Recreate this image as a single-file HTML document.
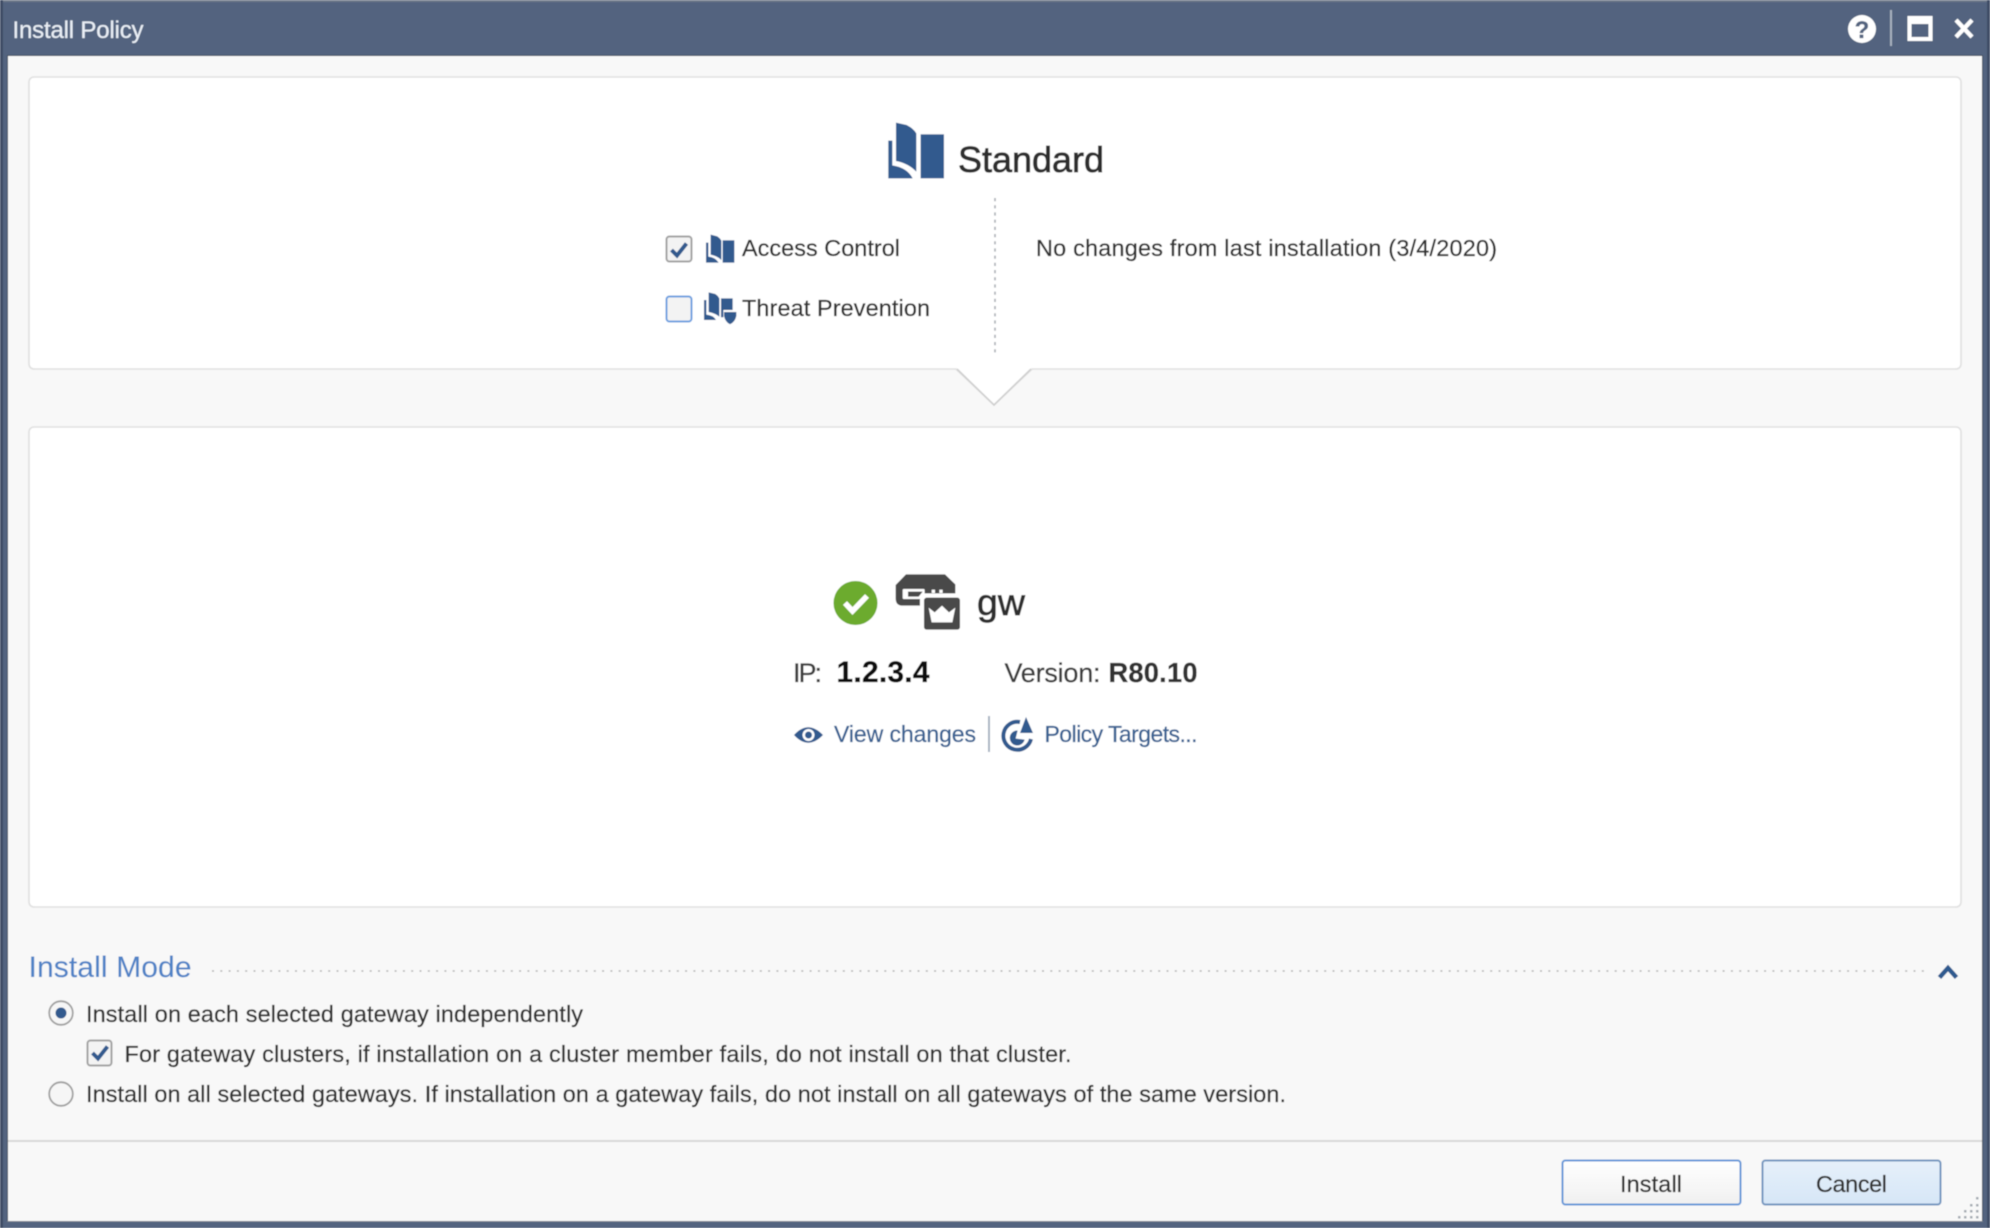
<!DOCTYPE html>
<html><head><meta charset="utf-8"><title>Install Policy</title>
<style>
html,body{margin:0;padding:0;width:1990px;height:1228px;overflow:hidden;background:#f8f8f8}
svg{display:block;position:absolute;left:0;top:0}
text{font-family:"Liberation Sans",sans-serif;fill:#303030;stroke:#303030;stroke-width:.3px}
</style></head><body>
<svg width="1990" height="1228" viewBox="0 0 1990 1228" xmlns="http://www.w3.org/2000/svg">
<defs>
<linearGradient id="gi" x1="0" y1="0" x2="0" y2="1"><stop offset="0" stop-color="#ffffff"/><stop offset="1" stop-color="#f0f0f0"/></linearGradient>
<linearGradient id="gc" x1="0" y1="0" x2="0" y2="1"><stop offset="0" stop-color="#e6f0fa"/><stop offset="1" stop-color="#d6e6f7"/></linearGradient>
<filter id="soft" x="0" y="0" width="100%" height="100%"><feGaussianBlur stdDeviation="0.55"/></filter>
</defs>
<g filter="url(#soft)">
<!-- window frame -->
<rect width="1990" height="1228" fill="#53647f"/>
<rect width="1990" height="2" fill="#6f7a8a"/>
<rect x="0" y="0" width="3" height="1228" fill="#414e66"/>
<rect x="1987" y="0" width="3" height="1228" fill="#414e66"/>
<rect x="8" y="55" width="1974" height="1167" fill="#f8f8f8"/>
<rect x="7" y="55" width="1976" height="1" fill="#454f60"/>
<rect x="7" y="55" width="1" height="1167" fill="#454f60"/>
<rect x="1982" y="55" width="1" height="1167" fill="#454f60"/>
<rect x="7" y="1221" width="1976" height="1" fill="#777f8c"/>

<!-- title -->
<text x="12.500" y="38" font-size="24" textLength="131" style="fill:#e9eef5;stroke:#e9eef5;stroke-width:.2px">Install Policy</text>
<circle cx="1862" cy="29" r="14" fill="#fff"/>
<text x="1862" y="38" font-size="24" font-weight="bold" text-anchor="middle" style="fill:#53647f;stroke:#53647f">?</text>
<rect x="1890" y="10" width="2" height="36" fill="#a7b0be"/>
<rect x="1907.500" y="16" width="25" height="25" fill="#fff"/>
<rect x="1911.500" y="24" width="17" height="13" fill="#53647f"/>
<path d="M1956 20L1972 37M1972 20L1956 37" stroke="#fff" stroke-width="4.200" fill="none"/>

<!-- top panel -->
<path d="M34 77H1956a5 5 0 0 1 5 5V364a5 5 0 0 1-5 5H1032L994 405L956 369H34a5 5 0 0 1-5-5V82a5 5 0 0 1 5-5Z" fill="#fff" stroke="#e0e0e0" stroke-width="1.600"/>
<path d="M957 369L994 405L1031 369" fill="none" stroke="#cfcfcf" stroke-width="1.600"/>
<line x1="995" y1="198" x2="995" y2="354" stroke="#a9adb3" stroke-width="1.600" stroke-dasharray="3.200 4"/>

<!-- book large -->
<g transform="translate(640 100) scale(.3333)" fill="#335a8e">
<path d="M768 68L800 75Q820 85 829 100V215Q805 190 768 183Z"/>
<path d="M745 122H757V196Q802 203 818 235H745Z"/>
<rect x="842" y="103" width="70" height="132"/>
</g>
<text x="958" y="172" font-size="36" textLength="146" style="fill:#2e2e2e;stroke:#2e2e2e;stroke-width:.8px">Standard</text>

<!-- checkboxes -->
<rect x="666.500" y="236.500" width="25" height="25" rx="3" fill="#f3f3f3" stroke="#a3a3a3" stroke-width="2"/>
<path d="M671.500 250L677 255.500L686.500 243.500" fill="none" stroke="#335a8e" stroke-width="4"/>
<g transform="translate(640 100) scale(.3333)" fill="#335a8e">
<path d="M212 404L232 409Q240 414 244 422V480Q232 468 212 464Z"/>
<path d="M198 428H205V470Q226 472 236 488H198Z"/>
<rect x="248" y="421" width="35" height="67"/>
</g>
<text x="742" y="256" font-size="23.400" textLength="158">Access Control</text>

<rect x="666.500" y="296.500" width="25" height="25" rx="3" fill="#f3f3f3" stroke="#6ea0e0" stroke-width="2"/>
<g transform="translate(640 100) scale(.3333)" fill="#335a8e">
<path d="M206 577L226 582Q234 587 238 595V650Q226 640 206 636Z"/>
<path d="M192 600H199V644Q220 646 228 660H192Z"/>
<path d="M243 595H278V630H250V652H243Z"/>
<path d="M252 636H289V648Q285 666 270 673Q256 666 252 648Z"/>
</g>
<text x="742" y="316" font-size="23.400" textLength="188">Threat Prevention</text>
<text x="1036" y="256" font-size="23.400" textLength="461">No changes from last installation (3/4/2020)</text>

<!-- middle panel -->
<rect x="29" y="427" width="1932" height="480" rx="5" fill="#fff" stroke="#e0e0e0" stroke-width="1.600"/>
<circle cx="855.500" cy="603" r="22" fill="#6cab2f"/>
<path d="M845 603L852.500 611L867 596" fill="none" stroke="#fff" stroke-width="5.500"/>
<!-- gateway -->
<g transform="translate(880 565) scale(.3333)">
<path d="M78 28H195L226 58V85H132V100H120L120 122H68Q47 122 47 100V60Z" fill="#4a4a4a"/>
<rect x="68" y="72" width="66" height="30" rx="3" fill="#fff"/>
<path d="M84 80H128L116 95H84Z" fill="#4a4a4a"/>
<rect x="155" y="74" width="10" height="10" fill="#fff"/><rect x="178" y="74" width="10" height="10" fill="#fff"/>
<rect x="132" y="98" width="108" height="96" rx="8" fill="#4a4a4a"/>
<path d="M146 128L164 142L186 122L207 142L226 128L217 172H155Z" fill="#fff"/>
</g>
<text x="977" y="615" font-size="37.500" textLength="48" style="fill:#2e2e2e;stroke:#2e2e2e;stroke-width:.7px">gw</text>
<text x="793" y="682" font-size="27" textLength="29" style="fill:#3c3c3c">IP:</text>
<text x="836.500" y="682" font-size="30" font-weight="bold" textLength="93" style="fill:#111;stroke:#111">1.2.3.4</text>
<text x="1004.500" y="682" font-size="27" textLength="96" style="fill:#3c3c3c">Version:</text>
<text x="1108.500" y="682" font-size="27.300" font-weight="bold" textLength="89">R80.10</text>

<!-- eye -->
<path d="M794 735Q808 719.500 823 735Q808 750.500 794 735Z" fill="#335a8e"/>
<circle cx="808.500" cy="735" r="6" fill="#fff"/><circle cx="808.500" cy="735" r="3.500" fill="#335a8e"/>
<text x="834" y="742" font-size="23" textLength="142" style="fill:#3a6292;stroke:#3a6292">View changes</text>
<rect x="988" y="716" width="2" height="36" fill="#a9b4c2"/>
<!-- policy targets icon -->
<path d="M1020 722A14 14 0 1 0 1031 739" fill="none" stroke="#335a8e" stroke-width="4"/>
<path d="M1017 731A7 7 0 1 0 1024 740L1015 739Z" fill="#335a8e" stroke="#335a8e" stroke-width="1"/>
<path d="M1026 717L1033 733H1020Z" fill="#335a8e"/>
<text x="1044.500" y="742" font-size="23" textLength="153" style="fill:#3a6292;stroke:#3a6292">Policy Targets...</text>

<!-- install mode -->
<text x="28.500" y="977" font-size="30" textLength="163" style="fill:#4f82c6;stroke:#4f82c6;stroke-width:.1px">Install Mode</text>
<line x1="212" y1="971" x2="1928" y2="971" stroke="#b4b4b4" stroke-width="1.600" stroke-dasharray="2 6.300"/>
<path d="M1939.500 977.500L1948 968L1956.500 977.500" fill="none" stroke="#2f5a8f" stroke-width="4.500"/>

<circle cx="61" cy="1013" r="11.800" fill="#f6f6f6" stroke="#a0a0a0" stroke-width="1.800"/>
<circle cx="61" cy="1013" r="5.500" fill="#335a8e"/>
<text x="86" y="1022" font-size="23.400" textLength="497">Install on each selected gateway independently</text>
<rect x="87.500" y="1040.500" width="24" height="25" rx="3" fill="#f3f3f3" stroke="#a3a3a3" stroke-width="2"/>
<path d="M92.500 1053L98 1058.500L107.500 1046.500" fill="none" stroke="#335a8e" stroke-width="4"/>
<text x="124.500" y="1062" font-size="23.400" textLength="947">For gateway clusters, if installation on a cluster member fails, do not install on that cluster.</text>
<circle cx="61" cy="1094" r="11.800" fill="#f6f6f6" stroke="#a0a0a0" stroke-width="1.800"/>
<text x="86" y="1102" font-size="23.400" textLength="1200">Install on all selected gateways. If installation on a gateway fails, do not install on all gateways of the same version.</text>

<!-- footer -->
<rect x="8" y="1140" width="1974" height="2" fill="#d8d8d8"/>
<rect x="1562.500" y="1160.500" width="178" height="44" rx="3" fill="url(#gi)" stroke="#6497d8" stroke-width="2"/>
<text x="1651" y="1192" font-size="23.400" text-anchor="middle" textLength="62">Install</text>
<rect x="1762.500" y="1160.500" width="178" height="44" rx="3" fill="url(#gc)" stroke="#7396bf" stroke-width="2"/>
<text x="1851.500" y="1192" font-size="23.400" text-anchor="middle" textLength="71">Cancel</text>

<!-- resize grip -->
<g fill="#a6acb4">
<rect x="1976" y="1197" width="2.500" height="2.500"/>
<rect x="1970" y="1204" width="2.500" height="2.500"/><rect x="1976" y="1204" width="2.500" height="2.500"/>
<rect x="1964" y="1210" width="2.500" height="2.500"/><rect x="1970" y="1210" width="2.500" height="2.500"/><rect x="1976" y="1210" width="2.500" height="2.500"/>
<rect x="1958" y="1216" width="2.500" height="2.500"/><rect x="1964" y="1216" width="2.500" height="2.500"/><rect x="1970" y="1216" width="2.500" height="2.500"/><rect x="1976" y="1216" width="2.500" height="2.500"/>
</g>
</g>
</svg>
</body></html>
